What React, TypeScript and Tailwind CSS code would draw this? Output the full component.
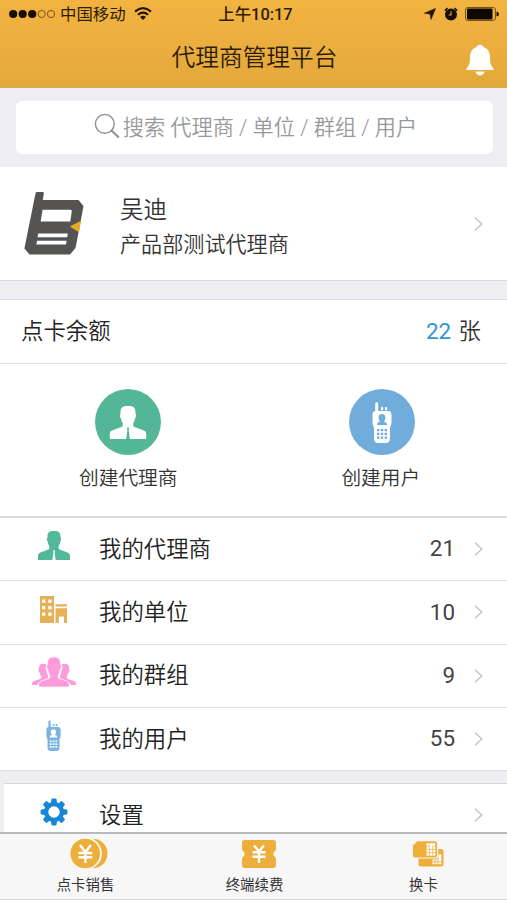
import React from 'react';

interface IconProps {
  className?: string;
}

interface MenuItem {
  label: string;
  count?: number;
  icon: React.ReactNode;
}

interface TabItem {
  label: string;
  icon: React.ReactNode;
}

const AgentIcon: React.FC<IconProps> = ({ className }) => (
  <svg viewBox="0 0 32 29" className={className} fill="currentColor" fillRule="evenodd">
    <path d="M16 0C20.5 0 22.8 1 22.5 6.5C23.5 7 23.2 10.3 22.1 10.8C21.9 13 21.4 14.2 20.6 15V17C20.8 18 21.5 18.6 23 19L29.5 21.4C31.4 22.2 32 23.2 32 25V29H0V25C0 23.2 .6 22.2 2.5 21.4L9 19C10.5 18.6 11.2 18 11.4 17V15C10.6 14.2 10.1 13 9.9 10.8C8.8 10.3 8.5 7 9.5 6.5C9.2 1 11.5 0 16 0ZM15 19.2L15.5 21L14.4 29H17.6L16.6 21L17.1 19.2Z" />
  </svg>
);

const RadioIcon: React.FC<IconProps> = ({ className }) => (
  <svg viewBox="0 0 20 41" className={className} fill="currentColor" fillRule="evenodd">
    <path d="M3.2 10V2C3.2-.2 6.2-.2 6.2 2V9Z" />
    <rect x="9" y="5" width="2.2" height="3.2" rx=".8" />
    <rect x="13" y="5" width="2.2" height="3.2" rx=".8" />
    <path d="M4 9H16C18.5 9 19.5 10.5 19.5 13V21C19.5 23.5 18 24 18 26V36C18 39.5 16.5 41 14 41H6C3.5 41 2 39.5 2 36V26C2 24 .5 23.5 .5 21V13C.5 10.5 1.5 9 4 9ZM5 23H15C15 20.7 13.8 20.2 12 19.5C14.3 16.5 14 12 10 12C6 12 5.7 16.5 8 19.5C6.2 20.2 5 20.7 5 23ZM5 27V29.2H7.4V27ZM8.8 27V29.2H11.2V27ZM12.6 27V29.2H15V27ZM5 30.8V33H7.4V30.8ZM8.8 30.8V33H11.2V30.8ZM12.6 30.8V33H15V30.8ZM5 34.6V36.8H7.4V34.6ZM8.8 34.6V36.8H11.2V34.6ZM12.6 34.6V36.8H15V34.6Z" />
  </svg>
);

const BuildingIcon: React.FC<IconProps> = ({ className }) => (
  <svg viewBox="0 0 27 27" className={className} fill="currentColor" fillRule="evenodd">
    <path d="M0 0H14V27H0ZM2 3.5V6.8H5.3V3.5ZM8.3 3.5V6.8H11.6V3.5ZM2 10V13.3H5.3V10ZM8.3 10V13.3H11.6V10ZM2 16.5V19.8H5.3V16.5ZM8.3 16.5V19.8H11.6V16.5Z" />
    <path d="M15.5 8.2H27V10.6H15.5ZM15.5 12.2H27V27H23.9V20.5H18.8V27H15.5Z" />
  </svg>
);

const GroupIcon: React.FC<IconProps> = ({ className }) => (
  <svg viewBox="0 0 44 30" className={className} fill="currentColor">
    <path d="M14.3 7.3C9.5 5.6 6.6 7.4 6.8 12C6 13.2 6.7 15 7.6 15.5C8 17.5 8.6 18.5 9.3 19.4V21C7.6 23.4 1.2 22.8 0 26.4V28H5.3C6 24.6 9 23.8 16 21.4V18.6C15 17 14.8 15.2 14.6 13.6C13.2 12 13.2 9.6 14.2 8.6Z" />
    <path d="M29.7 7.3C34.5 5.6 37.4 7.4 37.2 12C38 13.2 37.3 15 36.4 15.5C36 17.5 35.4 18.5 34.7 19.4V21C36.4 23.4 42.8 22.8 44 26.4V28H38.7C38 24.6 35 23.8 28 21.4V18.6C29 17 29.2 15.2 29.4 13.6C30.8 12 30.8 9.6 29.8 8.6Z" />
    <path d="M22 0C27 0 29 2.7 28.5 8C30 8.3 29.6 11.6 28.1 12.4C27.8 15 27 17 26.1 18V20.6C27.5 23 36.8 22.6 37.2 27V30H6.8V27C7.2 22.6 16.5 23 17.9 20.6V18C17 17 16.2 15 15.9 12.4C14.4 11.6 14 8.3 15.5 8C15 2.7 17 0 22 0Z" stroke="#fff" strokeWidth=".6" />
  </svg>
);

const GearIcon: React.FC<IconProps> = ({ className }) => (
  <svg viewBox="-14 -14 28 28" className={className} fill="currentColor">
    <circle r="7.9" fill="none" stroke="currentColor" strokeWidth="4.4" />
    {[0, 45, 90, 135, 180, 225, 270, 315].map(angle => (
      <path key={angle} transform={`rotate(${angle})`} d="M-3.1-9L-2.6-12.6Q-2.4-13.4-1.6-13.4H1.6Q2.4-13.4 2.6-12.6L3.1-9Z" />
    ))}
  </svg>
);

const CoinsIcon: React.FC<IconProps> = ({ className }) => (
  <svg viewBox="0 0 38 31" className={className} fill="none">
    <circle cx="22.7" cy="15.5" r="14.8" fill="#edae3c" />
    <circle cx="15.7" cy="15.5" r="16.2" fill="#f9f7f2" />
    <circle cx="15.2" cy="15.5" r="14.8" fill="#edae3c" />
    <path d="M10 7L15.4 14L20.8 7M8.5 15H22.3M8.5 19.3H22.3M15.4 14V25" stroke="#fff" strokeWidth="2.4" />
  </svg>
);

const TicketIcon: React.FC<IconProps> = ({ className }) => (
  <svg viewBox="0 0 34 28" className={className}>
    <path d="M3 0H31Q34 0 34 3V9.5L33 11Q29.5 14 33 17L34 18.5V25Q34 28 31 28H3Q0 28 0 25V18.5L1 17Q4.5 14 1 11L0 9.5V3Q0 0 3 0Z" fill="#edae3c" />
    <path d="M12 5.5L17 11.5L22 5.5M10.5 12.3H23.5M10.5 16.8H23.5M17 11.5V23" stroke="#fff" strokeWidth="2.4" fill="none" />
  </svg>
);

const SimIcon: React.FC<IconProps> = ({ className }) => (
  <svg viewBox="0 0 32 27" className={className} fill="#edae3c">
    <path d="M25.5 9H29Q31.5 9 31.5 11.5V24Q31.5 26.5 29 26.5H9Q6.5 26.5 6.5 24V18H26Z" />
    <path d="M20.5 19.5H26.5V14.5H29.3V24.3H20.5Z" fill="#fff" />
    <path d="M23 20V24.5M26 20V24.5M20.5 21.8H29.3" stroke="#edae3c" strokeWidth=".9" />
    <path d="M5 .7H23Q25.7 .7 25.7 3.4V15.4Q25.7 18 23 18H3Q.3 18 .3 15.4V5.2Z" stroke="#f7f7f7" strokeWidth="1.2" />
    <path d="M14.5 3.2H23.3V15.7H14.5Z" fill="#fff" />
    <path d="M17.3 3.2V15.7M20.7 6V15.7M14.5 6.3H17M14.5 9.4H23.3M14.5 12.6H23.3M20.7 6.3H23.3" stroke="#edae3c" strokeWidth=".7" />
  </svg>
);

const Chevron: React.FC<IconProps> = ({ className }) => (
  <svg viewBox="0 0 9 14" className={`h-[14px] w-[9px] ${className ?? ''}`} fill="none" stroke="#c5c5c9" strokeWidth="1.5">
    <path d="M1 .8L7.8 7L1 13.2" />
  </svg>
);

const menuItems: MenuItem[] = [
  { label: '我的代理商', count: 21, icon: <AgentIcon className="mb-2 h-[29px] w-8 text-[#52b899]" /> },
  { label: '我的单位', count: 10, icon: <BuildingIcon className="mb-1.5 h-[27px] w-[27px] text-[#e5b056]" /> },
  { label: '我的群组', count: 9, icon: <GroupIcon className="mb-2 h-[30px] w-11 text-[#fb9bda]" /> },
  { label: '我的用户', count: 55, icon: <RadioIcon className="mb-1.5 h-[31px] w-[15px] text-[#7db3e2]" /> },
];

const tabs: TabItem[] = [
  { label: '点卡销售', icon: <CoinsIcon className="ml-2 h-[31px] w-[38px]" /> },
  { label: '终端续费', icon: <TicketIcon className="ml-2.5 h-7 w-[34px]" /> },
  { label: '换卡', icon: <SimIcon className="ml-2.5 h-[27px] w-8" /> },
];

const StatusBar: React.FC = () => (
  <div className="grid h-7 grid-cols-3 items-center pr-2 pl-[9px] text-[16.4px] text-[#2c1d05]">
    <div className="flex items-center">
      <svg viewBox="0 0 47 10" className="h-[10px] w-[47px]">
        <g fill="#160e02">
          <circle cx="4.2" cy="5" r="4.1" />
          <circle cx="13.7" cy="5" r="4.1" />
          <circle cx="23.2" cy="5" r="4.1" />
        </g>
        <g fill="none" stroke="#7c5616" strokeWidth="1">
          <circle cx="32.7" cy="5" r="3.6" />
          <circle cx="42" cy="5" r="3.6" />
        </g>
      </svg>
      <span className="mt-0.5 ml-1">中国移动</span>
      <svg viewBox="0 0 18 13" className="ml-2 h-[13px] w-[18px]" fill="none" stroke="#221604" strokeWidth="2.1">
        <path d="M1 4.6Q9-2.2 17 4.6M3.9 7.8Q9 3.6 14.1 7.8" />
        <path d="M6 10Q9 7.4 12 10L9 13Z" fill="#221604" stroke="none" />
      </svg>
    </div>
    <span className="mt-0.5 ml-[3px] text-center font-medium">上午10:17</span>
    <div className="flex items-center justify-end">
      <svg viewBox="0 0 13 13" className="h-3 w-3" fill="#221604">
        <path d="M12.5 .5L7.6 12.5L6.6 6.6L.5 5.6Z" stroke="#221604" strokeWidth=".6" />
      </svg>
      <svg viewBox="0 0 14 14" className="mr-px ml-2 h-[14px] w-[14px]">
        <circle cx="7" cy="7.6" r="6" fill="#160e02" />
        <path d="M.8 3.6L3.6 1M13.2 3.6L10.4 1" stroke="#160e02" strokeWidth="1.5" />
        <path d="M7 4.3V8H4.6" stroke="#edb03e" strokeWidth="1.1" fill="none" />
      </svg>
      <svg viewBox="0 0 34 14" className="ml-1.5 h-[14px] w-[34px]">
        <rect x=".6" y=".6" width="29.8" height="12.8" rx="2" fill="none" stroke="#6a4a12" />
        <rect x="2" y="1.6" width="25.5" height="10.8" rx="1" fill="#0c0801" />
        <path d="M31.5 4.5Q34 5 34 7Q34 9 31.5 9.5Z" fill="#160e02" />
      </svg>
    </div>
  </div>
);

const Header: React.FC = () => (
  <header className="h-[88px] border-b border-[#dca84c] bg-linear-to-b from-[#f3b341] to-[#e3a83c]">
    <StatusBar />
    <div className="grid h-[59px] grid-cols-[1fr_auto_1fr] items-center px-[13px]">
      <h1 className="col-start-2 mt-0.5 ml-0.5 text-[23.7px] leading-none font-[350] text-[#2b1d06]">代理商管理平台</h1>
      <svg viewBox="0 0 28 32" className="mt-1 h-8 w-7 justify-self-end" fill="#fff">
        <path d="M10.6 3C11 0 17 0 17.4 3C22.5 4.8 24 9 24 13.5C24 19 24.8 21.5 27.5 24.2V26H.5V24.2C3.2 21.5 4 19 4 13.5C4 9 5.5 4.8 10.6 3Z" />
        <path d="M9.5 27.6H18.5Q17.5 31.6 14 31.6Q10.5 31.6 9.5 27.6Z" />
      </svg>
    </div>
  </header>
);

const ProfileCard: React.FC = () => (
  <section className="flex h-[114px] items-center border-b border-[#d9d9dc] bg-white px-6">
    <svg viewBox="0 0 60 63" className="h-[63px] w-[60px]">
      <path d="M11.5 1.5Q12-.1 13-.1H18.4Q20 0 19.8 1.5L18.8 8H54.5L59.5 14L56.5 30L54.5 40.5L51.5 56L46 62.5H5.5L.4 56.5Z" fill="#555452" />
      <path d="M18.6 17.8H46.5Q48 17.8 47.8 19.3L46.3 29.4H16.6ZM14.2 41.4H43.8L43.2 45.3H13.5ZM13 48.7H42.7L42 52.6H12.4Z" fill="#fff" />
      <path d="M45.7 34.6L57 28.7L55 40.2Z" fill="#e7a928" />
    </svg>
    <div className="mt-1.5 ml-9 flex-1 font-[350] text-[#333]">
      <div className="text-[23.5px] leading-9">吴迪</div>
      <div className="text-[21.1px] leading-[33px]">产品部测试代理商</div>
    </div>
    <Chevron />
  </section>
);

const MenuRow: React.FC<MenuItem> = ({ label, count, icon }) => (
  <li className="flex h-[63.25px] items-center border-b border-[#dddde0] bg-white pr-6">
    <div className="flex w-[99px] items-center justify-center pl-2">{icon}</div>
    <span className="mt-px flex-1 text-[22.4px] font-[350] text-[#222]">{label}</span>
    <span className="text-[22.4px] text-[#444]">{count}</span>
    <Chevron className="ml-[19px]" />
  </li>
);

export default function App() {
  return (
    <div className="flex h-[900px] w-[507px] flex-col overflow-hidden bg-[#eeeef2] font-['Roboto','Noto_Sans_CJK_SC',sans-serif]" lang="zh-CN">
      <Header />

      <div className="py-[13px] pr-3.5 pl-4">
        <div className="flex h-[53px] items-center justify-center rounded-md bg-white text-[21.2px] font-[350] text-[#999]">
          <svg viewBox="0 0 26 26" className="mr-[3px] ml-0.5 h-[26px] w-[26px] -translate-y-0.5" fill="none" stroke="#909090" strokeWidth="1.4">
            <circle cx="10.8" cy="10.8" r="9.4" />
            <path d="M17.5 17.5L24.8 24.4" strokeWidth="2" />
          </svg>
          <span>搜索 代理商 / 单位 / 群组 / 用户</span>
        </div>
      </div>

      <ProfileCard />

      <section className="mt-[18px] border-t border-[#dcdce0] bg-white font-[350] text-[#222]">
        <div className="flex h-16 items-center justify-between border-b border-[#dedee1] pr-[26px] pl-[21px] text-[22.4px]">
          <span>点卡余额</span>
          <span className="text-[#333]">
            <span className="mr-0.5 font-normal text-[#2f95d8]">22</span> 张
          </span>
        </div>
        <div className="grid h-[154px] grid-cols-2 border-b-2 border-[#dedee1] pt-[25px] pl-0.5">
          <div className="flex flex-col items-center">
            <div className="flex size-[66px] items-center justify-center rounded-full bg-[#53b797]">
              <AgentIcon className="h-[33px] w-[38px] text-white" />
            </div>
            <span className="mt-[9px] text-[19.7px] text-[#333]">创建代理商</span>
          </div>
          <div className="flex flex-col items-center">
            <div className="ml-0.5 flex size-[66px] items-center justify-center rounded-full bg-[#70acdc]">
              <RadioIcon className="h-[41px] w-5 text-white" />
            </div>
            <span className="mt-[9px] text-[19.7px] text-[#333]">创建用户</span>
          </div>
        </div>
      </section>

      <ul>
        {menuItems.map(item => (
          <MenuRow key={item.label} {...item} />
        ))}
      </ul>

      <section className="mt-3 ml-1 flex h-[49px] items-start border-t border-[#d5d5d9] bg-white pr-6">
        <div className="flex w-[95px] justify-center pt-3.5 pl-1">
          <GearIcon className="h-7 w-7 text-[#1886d3]" />
        </div>
        <span className="mt-[14px] flex-1 text-[22.4px] leading-[34px] font-[350] text-[#222]">设置</span>
        <Chevron className="mt-6" />
      </section>

      <nav className="grid h-[68px] grid-cols-3 border-t-2 border-b border-t-[#b9b9bb] border-b-[#d4d4d4] bg-[#f7f7f7]">
        {tabs.map(tab => (
          <div key={tab.label} className="flex flex-col items-center pt-[3px]">
            <div className="flex h-[33px] items-center">{tab.icon}</div>
            <span className="mt-1.5 ml-0.5 text-[14.4px] leading-5 text-[#333]">{tab.label}</span>
          </div>
        ))}
      </nav>
    </div>
  );
}
